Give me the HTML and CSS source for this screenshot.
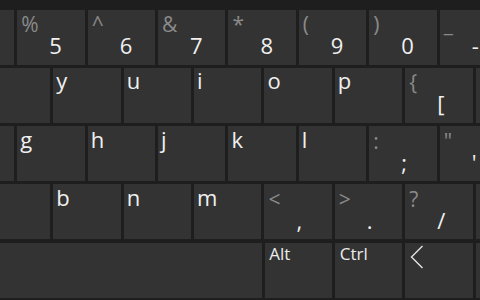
FILE: index.html
```html
<!DOCTYPE html>
<html>
<head>
<meta charset="utf-8">
<link rel="stylesheet" href="styles.css">
</head>
<body>
<div class="kb">
  <div class="row shift-a">
    <div class="key"></div>
    <div class="key"><span class="sec">%</span><span class="pri">5</span></div>
    <div class="key"><span class="sec">^</span><span class="pri">6</span></div>
    <div class="key"><span class="sec">&amp;</span><span class="pri">7</span></div>
    <div class="key"><span class="sec">*</span><span class="pri">8</span></div>
    <div class="key"><span class="sec">(</span><span class="pri">9</span></div>
    <div class="key"><span class="sec">)</span><span class="pri">0</span></div>
    <div class="key"><span class="sec">_</span><span class="pri">-</span></div>
  </div>
  <div class="row shift-b">
    <div class="key let"></div>
    <div class="key let"><span class="ltr">y</span></div>
    <div class="key let"><span class="ltr">u</span></div>
    <div class="key let"><span class="ltr">i</span></div>
    <div class="key let"><span class="ltr">o</span></div>
    <div class="key let"><span class="ltr">p</span></div>
    <div class="key"><span class="sec">{</span><span class="pri">[</span></div>
    <div class="key"></div>
  </div>
  <div class="row shift-a">
    <div class="key let"></div>
    <div class="key let"><span class="ltr">g</span></div>
    <div class="key let"><span class="ltr">h</span></div>
    <div class="key let"><span class="ltr">j</span></div>
    <div class="key let"><span class="ltr">k</span></div>
    <div class="key let"><span class="ltr">l</span></div>
    <div class="key"><span class="sec">:</span><span class="pri">;</span></div>
    <div class="key"><span class="sec">"</span><span class="pri">'</span></div>
  </div>
  <div class="row shift-b">
    <div class="key let"></div>
    <div class="key let"><span class="ltr">b</span></div>
    <div class="key let"><span class="ltr">n</span></div>
    <div class="key let"><span class="ltr">m</span></div>
    <div class="key"><span class="sec">&lt;</span><span class="pri">,</span></div>
    <div class="key"><span class="sec">&gt;</span><span class="pri">.</span></div>
    <div class="key"><span class="sec">?</span><span class="pri">/</span></div>
    <div class="key"></div>
  </div>
  <div class="row shift-b">
    <div class="key space"></div>
    <div class="key mod"><span class="word">Alt</span></div>
    <div class="key mod"><span class="word">Ctrl</span></div>
    <div class="key arrow">
      <svg class="chev" width="14" height="24" viewBox="0 0 14 24"><polyline points="12.5,1 1.5,12 12.5,23" fill="none" stroke="#e4e4e4" stroke-width="1.4"/></svg>
    </div>
    <div class="key arrow"></div>
  </div>
</div>
</body>
</html>
```

FILE: styles.css
```css
html, body {
  margin: 0;
  padding: 0;
  background: #1e1e1e;
}

.kb {
  width: 480px;
  height: 300px;
  overflow: hidden;
  box-sizing: border-box;
  padding-top: 9.5px;
  display: flex;
  flex-direction: column;
  gap: 3.3px;
  font-family: "Open Sans", "Noto Sans", sans-serif;
}

.row {
  display: flex;
  gap: 3px;
  flex: none;
}

.shift-a {
  margin-left: -53.1px;
}

.shift-b {
  margin-left: -17.1px;
}

.key {
  flex: none;
  width: 67.4px;
  height: 55px;
  box-sizing: border-box;
  background: #333333;
  padding: 4.6px 0 0 4px;
}

.sec {
  display: block;
  font-size: 21px;
  line-height: 20px;
  height: 20px;
  color: #8a8a8a;
}

.pri {
  display: block;
  font-size: 22px;
  line-height: 22px;
  padding-left: 28px;
  color: #f0f0f0;
}

.key.let {
  padding: 1.5px 0 0 3px;
}

.ltr {
  display: block;
  font-size: 22px;
  line-height: 22px;
  color: #f0f0f0;
}

.key.space {
  width: 278.6px;
}

.key.mod {
  padding: 2.2px 0 0 4.8px;
}

.word {
  display: block;
  font-size: 17px;
  line-height: 17px;
  color: #ececec;
}

.key.arrow {
  padding: 2px 0 0 4.5px;
}

.chev {
  display: block;
}
```
